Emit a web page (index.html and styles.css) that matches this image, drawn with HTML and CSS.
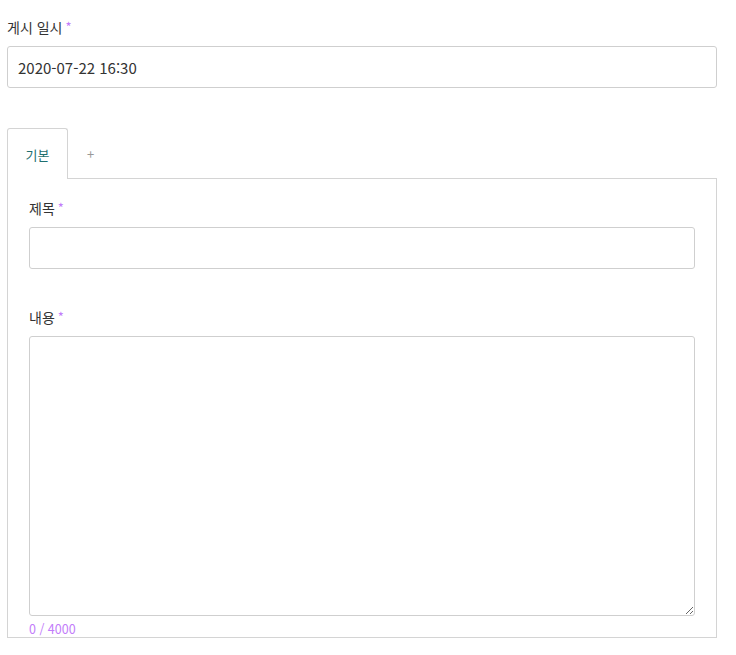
FILE: index.html
```html
<!DOCTYPE html>
<html lang="ko">
<head>
<meta charset="utf-8">
<link rel="stylesheet" href="styles.css">
</head>
<body>
<div class="page">
  <div class="field">
    <label class="label">게시 일시<span class="req">*</span></label>
    <input class="input" type="text" value="2020-07-22 16:30">
  </div>
  <div class="tabs">
    <div class="tab-bar">
      <div class="tab active">기본</div>
      <div class="tab add">+</div>
      <div class="tab-fill"></div>
    </div>
    <div class="panel">
      <div class="field">
        <label class="label">제목<span class="req">*</span></label>
        <input class="input" type="text">
      </div>
      <div class="field content">
        <label class="label">내용<span class="req">*</span></label>
        <textarea class="textarea"></textarea>
        <div class="counter">0 / 4000</div>
      </div>
    </div>
  </div>
</div>
</body>
</html>
```
FILE: styles.css
```css
* { box-sizing: border-box; }
html, body { margin: 0; padding: 0; background: #fff; }
body {
  font-family: "Noto Sans CJK KR", "Noto Sans", sans-serif;
  color: #333;
}
.page {
  width: 710px;
  margin-left: 7px;
  padding-top: 17px;
}
.field { display: flex; flex-direction: column; }
.label {
  font-size: 14px;
  line-height: 20px;
  color: #333;
  margin-bottom: 9px;
}
.req { color: #c27cfa; font-size: 13px; margin-left: 3px; vertical-align: top; }
.input {
  height: 42px;
  width: 100%;
  border: 1px solid #cfcfcf;
  border-radius: 3px;
  padding: 0 10px;
  font-family: "Noto Sans CJK KR", "Noto Sans", sans-serif;
  font-size: 15px;
  color: #333;
  outline: none;
}
.tabs { margin-top: 40px; }
.tab-bar { display: flex; height: 51px; }
.tab {
  width: 61px;
  display: flex;
  align-items: center;
  justify-content: center;
  font-size: 13px;
  border-bottom: 1px solid #d4d4d4;
}
.tab.active {
  border: 1px solid #d4d4d4;
  border-bottom: none;
  border-radius: 3px 3px 0 0;
  color: #1f6f6f;
}
.tab.add { width: 45px; color: #999; font-size: 13px; }
.tab-fill { flex: 1; border-bottom: 1px solid #d4d4d4; }
.panel {
  border: 1px solid #d4d4d4;
  border-top: none;
  padding: 19px 21px 0 21px;
  height: 459px;
}
.content { margin-top: 38px; }
.textarea {
  height: 280px;
  width: 100%;
  border: 1px solid #cfcfcf;
  border-radius: 3px;
  resize: vertical;
  outline: none;
  display: block;
}
.counter {
  font-size: 12.5px;
  color: #c27cfa;
  line-height: 16px;
  margin-top: 5px;
  margin-left: 0;
}
```
